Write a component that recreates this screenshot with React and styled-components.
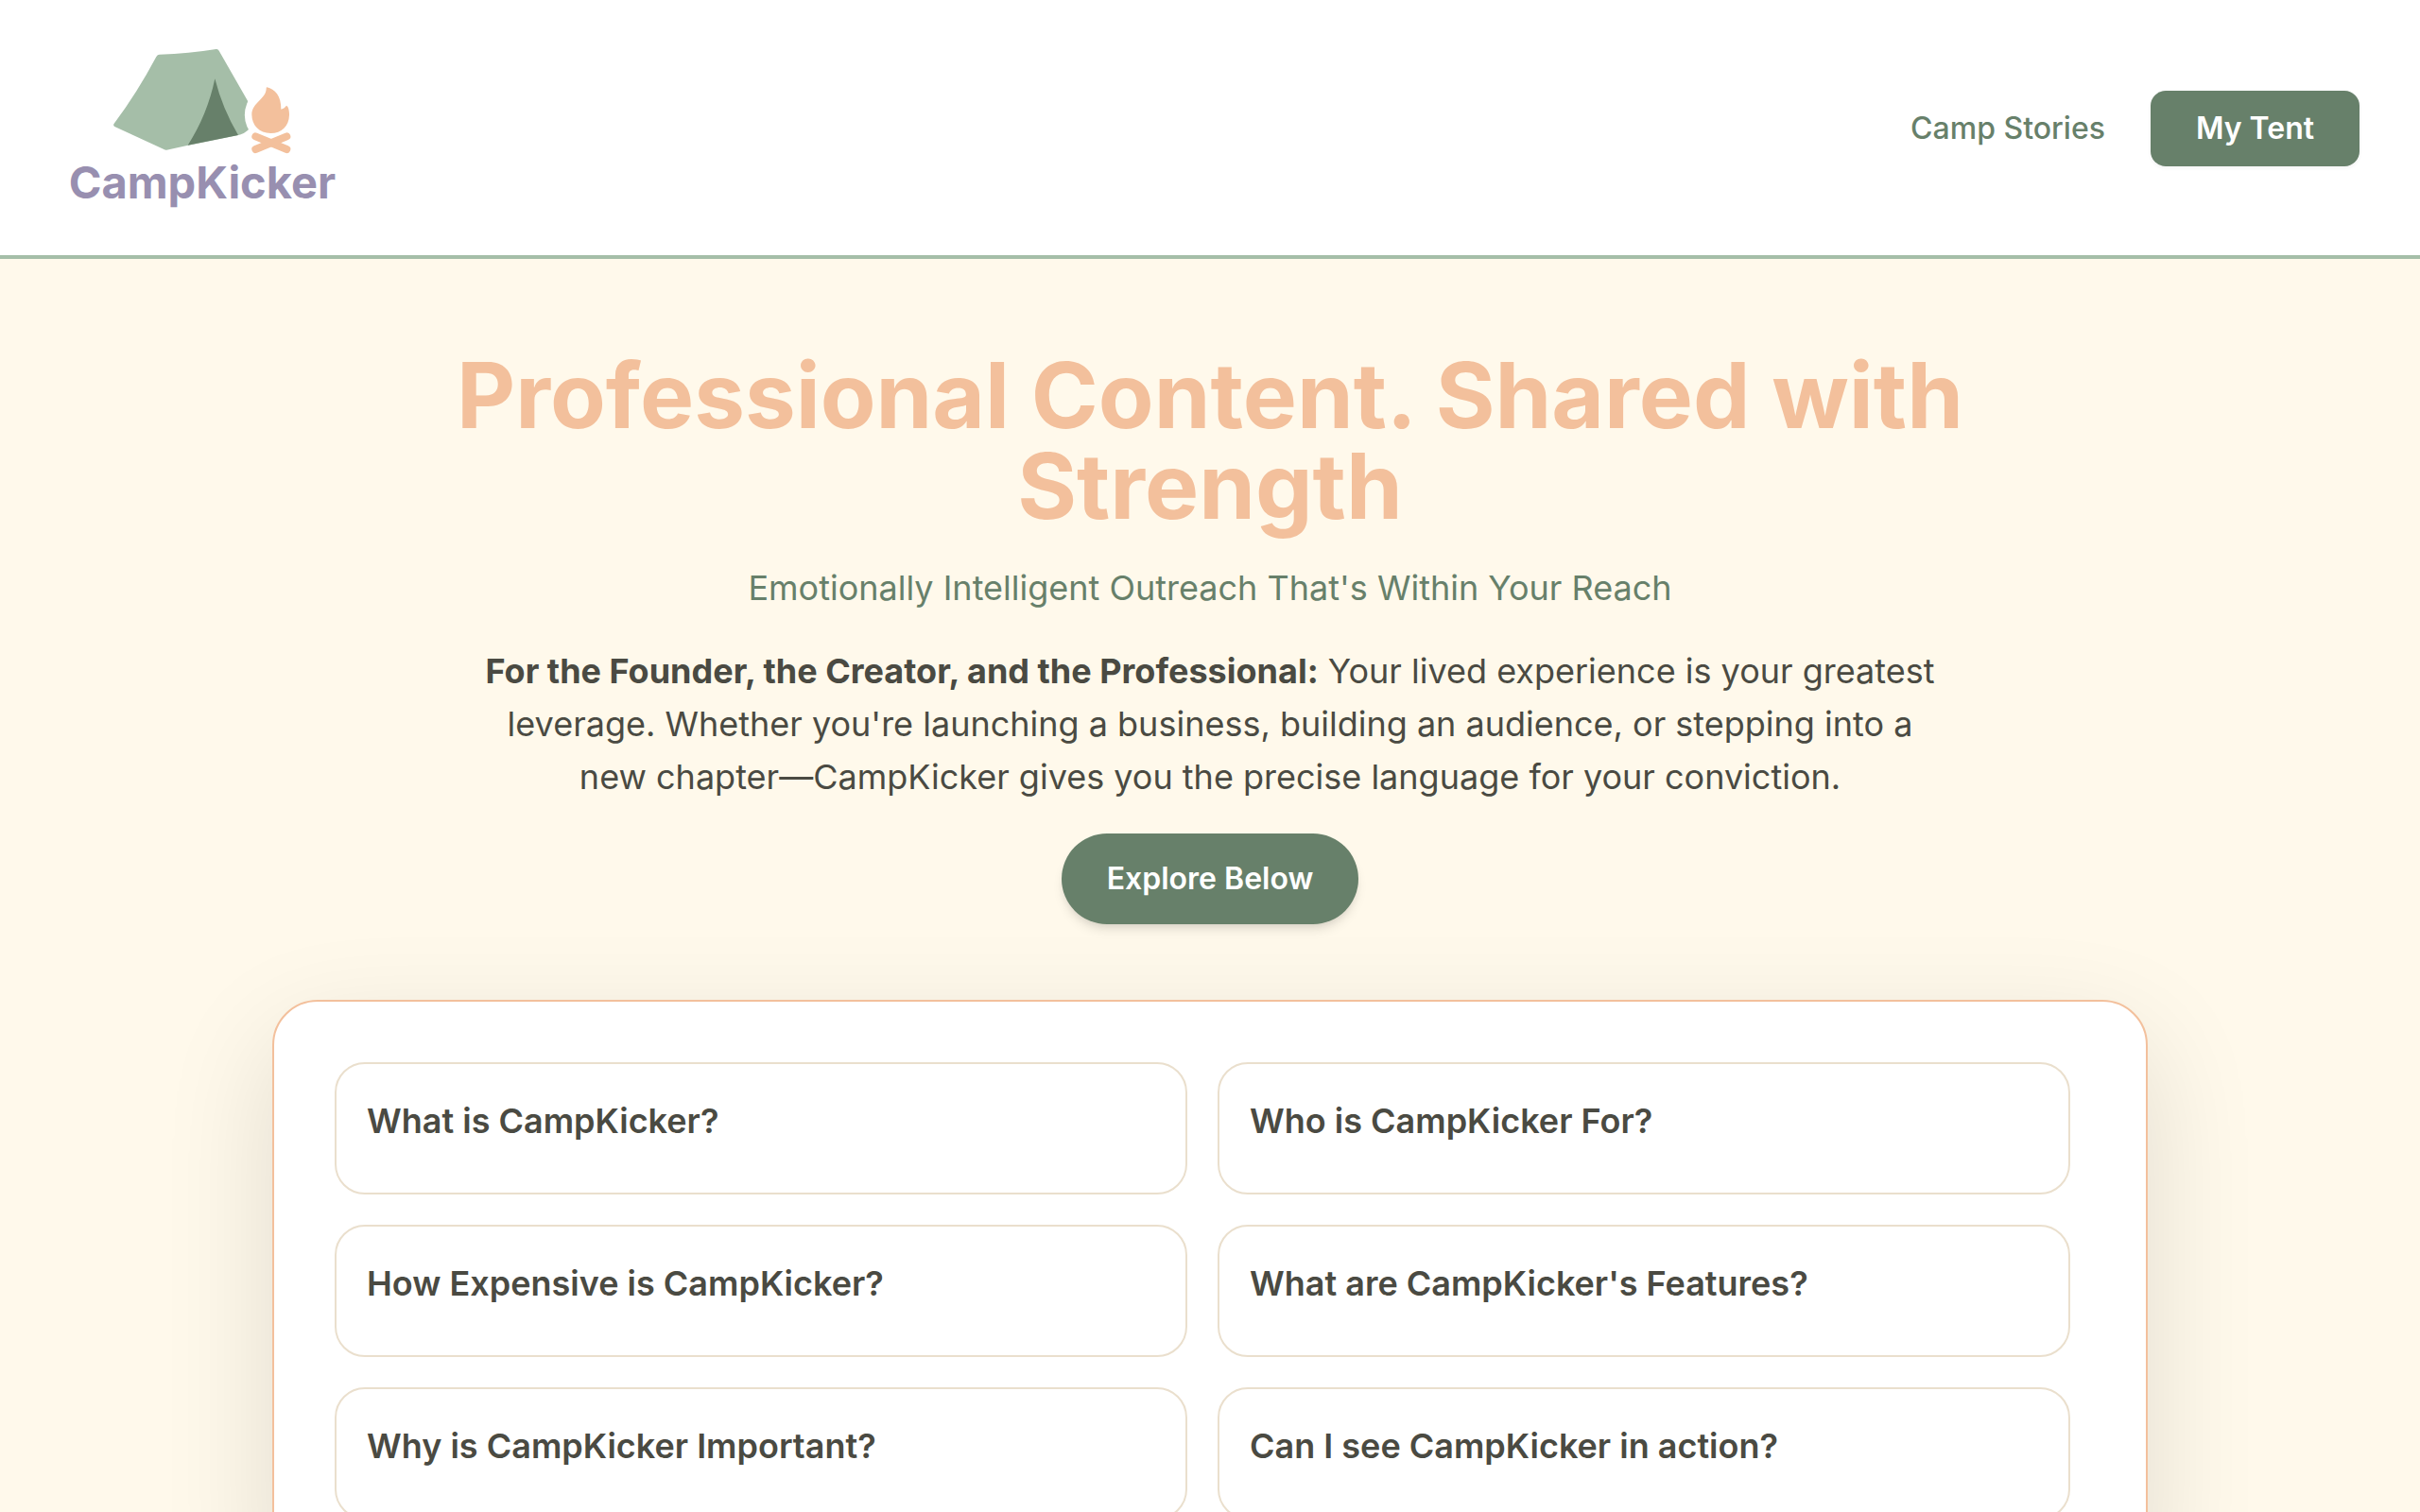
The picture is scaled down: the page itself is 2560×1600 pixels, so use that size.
import React from "react";
import styled, { createGlobalStyle } from "styled-components";

const colors = {
  cream: "#fff9eb",
  sage: "#a5bea8",
  forest: "#67806a",
  peach: "#f3c09c",
  lavender: "#988fb0",
  ink: "#4a4a42",
  sand: "#eadfcd",
};

const GlobalStyle = createGlobalStyle`
  *, *::before, *::after { box-sizing: border-box; }
  html { background: ${colors.cream}; }
  body {
    margin: 0;
    background: ${colors.cream};
    color: ${colors.ink};
    font-family: Inter, "Liberation Sans", sans-serif;
  }
  h1, h2, p { margin: 0; }
`;

const Page = styled.div`
  height: 100vh;
  overflow: hidden auto;
  scrollbar-width: none;
`;

const Header = styled.header`
  display: flex;
  align-items: center;
  justify-content: space-between;
  padding: 33px 64px 31px;
  background: #ffffff;
  border-bottom: 4px solid ${colors.sage};
`;

const LogoLink = styled.a`
  display: block;
  height: 206px;
`;

const LogoArt = styled.svg`
  display: block;
  width: 300px;
  height: 206px;
`;

const Wordmark = styled.text`
  font-family: Inter, "Open Sans", sans-serif;
  font-weight: 700;
  font-size: 141px;
  fill: ${colors.lavender};
`;

const Nav = styled.nav`
  display: flex;
  align-items: center;
  gap: 48px;
`;

const NavLink = styled.a`
  color: ${colors.forest};
  font-size: 32px;
  line-height: 48px;
  font-weight: 500;
  text-decoration: none;
`;

const Button = styled.button`
  border: 0;
  padding: ${(p) => (p.$pill ? "24px 48px" : "16px 48px")};
  border-radius: ${(p) => (p.$pill ? "48px" : "16px")};
  background: ${colors.forest};
  color: #ffffff;
  font-family: inherit;
  font-size: 32px;
  line-height: 48px;
  font-weight: 600;
  cursor: pointer;
  box-shadow: ${(p) =>
    p.$pill
      ? "0 8px 12px -2px rgba(0, 0, 0, 0.1), 0 4px 8px -4px rgba(0, 0, 0, 0.1)"
      : "0 2px 4px rgba(0, 0, 0, 0.05)"};
`;

const Main = styled.main`
  display: flex;
  flex-direction: column;
  align-items: center;
  gap: 80px;
  padding: 96px 64px;
`;

const Hero = styled.section`
  display: flex;
  flex-direction: column;
  align-items: center;
  gap: 32px;
  max-width: 1792px;
  text-align: center;
`;

const Title = styled.h1`
  color: ${colors.peach};
  font-size: 96px;
  line-height: 96px;
  font-weight: 700;
`;

const Subtitle = styled.p`
  color: ${colors.forest};
  font-size: 36px;
  line-height: 56px;
`;

const Lead = styled.p`
  max-width: 1536px;
  font-size: 36px;
  line-height: 56px;
`;

const Panel = styled.section`
  width: 100%;
  max-width: 1984px;
  padding: 64px 80px 64px 64px;
  background: #ffffff;
  border: 2px solid ${colors.peach};
  border-radius: 48px;
  box-shadow: 0 40px 120px rgba(0, 0, 0, 0.12);
`;

const Grid = styled.div`
  display: grid;
  grid-template-columns: repeat(2, 1fr);
  gap: 32px;
`;

const Card = styled.article`
  padding: 32px 32px 48px;
  border: 2px solid ${colors.sand};
  border-radius: 32px;
`;

const Question = styled.h2`
  font-size: 36px;
  line-height: 56px;
  font-weight: 600;
`;

const questions = [
  "What is CampKicker?",
  "Who is CampKicker For?",
  "How Expensive is CampKicker?",
  "What are CampKicker's Features?",
  "Why is CampKicker Important?",
  "Can I see CampKicker in action?",
];

function Logo() {
  return (
    <LogoArt viewBox="42 9 900 618" role="img" aria-label="CampKicker">
      <path
        d="M356 83 Q450 80 536 66 Q542 65 545 71 L636 230 Q637 233 634 238 Q619 276 634 312 L638 319 Q639 322 636 324 Q624 335 606 339 L447 371 L379 386 Q374 387 370 384 L214 312 Q209 309 211 304 Q285 205 346 90 Q350 83 356 83Z"
        fill={colors.sage}
      />
      <path d="M532 160 Q556 255 606 339 L446 371 Q508 275 532 160Z" fill={colors.forest} />
      <path
        d="M697 187 C722 192 743 215 742 257 C750 255 755 250 759 245 C765 248 768 260 768 275 C767 310 744 333 709 333 C673 333 649 308 649 274 C649 235 694 225 695 191 Q695 187 697 187Z"
        fill={colors.peach}
      />
      <g stroke={colors.peach} strokeWidth="24" strokeLinecap="round">
        <path d="M661 343 L760 384" />
        <path d="M760 343 L661 384" />
      </g>
      <Wordmark x="68" y="540">
        CampKicker
      </Wordmark>
    </LogoArt>
  );
}

export default function App() {
  return (
    <>
      <GlobalStyle />
      <Page>
        <Header>
          <LogoLink href="#home">
            <Logo />
          </LogoLink>
          <Nav>
            <NavLink href="#stories">Camp Stories</NavLink>
            <Button type="button">My Tent</Button>
          </Nav>
        </Header>
        <Main>
          <Hero>
            <Title>Professional Content. Shared with Strength</Title>
            <Subtitle>Emotionally Intelligent Outreach That's Within Your Reach</Subtitle>
            <Lead>
              <strong>For the Founder, the Creator, and the Professional:</strong> Your lived
              experience is your greatest leverage. Whether you're launching a business, building an
              audience, or stepping into a new chapter—CampKicker gives you the precise language for
              your conviction.
            </Lead>
            <Button type="button" $pill>
              Explore Below
            </Button>
          </Hero>
          <Panel>
            <Grid>
              {questions.map((question) => (
                <Card key={question}>
                  <Question>{question}</Question>
                </Card>
              ))}
            </Grid>
          </Panel>
        </Main>
      </Page>
    </>
  );
}
